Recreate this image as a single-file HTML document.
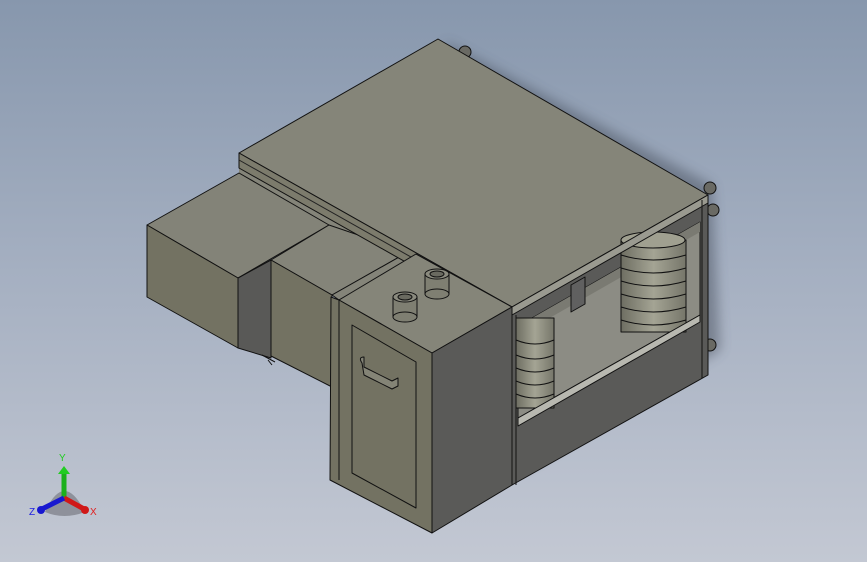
<!DOCTYPE html>
<html><head><style>
html,body{margin:0;padding:0;width:867px;height:562px;overflow:hidden}
body{background:linear-gradient(180deg,#8797ad 0%,#a3aec0 45%,#c3c8d3 100%)}
svg{position:absolute;left:0;top:0}
</style></head><body>
<svg width="867" height="562" viewBox="0 0 867 562">
<defs>
<filter id="sh" x="-20%" y="-20%" width="140%" height="140%"><feGaussianBlur stdDeviation="6"/></filter>
<linearGradient id="spr" x1="0" x2="1"><stop offset="0" stop-color="#6e6e62"/><stop offset="0.5" stop-color="#a4a494"/><stop offset="1" stop-color="#76766a"/></linearGradient>
</defs>
<g stroke="#111" stroke-width="1" stroke-linejoin="round">
<polygon points="445,42 712,185 720,350 520,470" fill="#3a4250" opacity="0.45" stroke="none" filter="url(#sh)"/>
<circle cx="465" cy="52" r="6" fill="#6a6a64"/>
<circle cx="710" cy="188" r="6" fill="#6a6a64"/>
<circle cx="713" cy="210" r="6" fill="#6a6a64"/>
<circle cx="710" cy="345" r="6" fill="#6a6a64"/>
<polygon points="239,166 420,266 408,252 329,225 239,173" fill="#848479" stroke="none"/>
<polygon points="147,225 239,173 329,225 238,278" fill="#838378"/>
<polygon points="147,225 238,278 238,348 147,297" fill="#737262"/>
<polygon points="238,278 271,260 271,358 238,348" fill="#595957"/>
<polygon points="271,260 329,225 408,252 332,295" fill="#848479"/>
<polygon points="332,295 408,252 418,256 339,300" fill="#848479"/>
<polygon points="271,260 332,295 332,387 271,356" fill="#737262"/>
<path d="M262,355 L275,362 M268,360 l4,5" fill="none"/>
<polygon points="239,153 438,39 708,195 512,307" fill="#858579"/>
<polygon points="239,153 512,307 512,322 239,168" fill="#7c7b6c"/>
<line x1="239" y1="160" x2="512" y2="314" stroke="#222"/>
<polygon points="512,307 708,195 708,375 512,485" fill="#5a5a58"/>
<polygon points="518,326 700,222 700,315 518,418" fill="#8c8c84"/>
<polygon points="518,326 700,222 700,232 518,336" fill="#7a7a72" stroke="none"/>
<polygon points="571,285 585,277 585,304 571,312" fill="#606060"/>
<g>
<rect x="621" y="240" width="65" height="92" fill="url(#spr)"/>
<path d="M621,255 q32,10 65,0 M621,268 q32,10 65,0 M621,281 q32,10 65,0 M621,294 q32,10 65,0 M621,307 q32,10 65,0 M621,320 q32,10 65,0" fill="none"/>
<ellipse cx="653" cy="240" rx="32" ry="8" fill="#a0a090"/>
</g>
<g>
<rect x="516" y="318" width="38" height="90" fill="url(#spr)"/>
<path d="M516,340 q19,8 38,0 M516,355 q19,8 38,0 M516,368 q19,8 38,0 M516,381 q19,8 38,0 M516,394 q19,8 38,0" fill="none"/>
</g>
<polygon points="518,418 700,315 700,322 518,426" fill="#b8b8b0"/>
<polygon points="512,307 708,195 708,203 512,315" fill="#9a9a90"/>
<line x1="516" y1="315" x2="516" y2="485"/>
<line x1="702" y1="200" x2="702" y2="378"/>
<polygon points="339,300 416,254 512,307 432,353" fill="#858579"/>
<polygon points="331,297 339,300 432,353 432,533 330,480" fill="#737262"/>
<polygon points="432,353 512,307 512,485 432,533" fill="#5a5a58"/>
<line x1="339" y1="300" x2="339" y2="480"/>
<polygon points="352,325 416,362 416,508 352,473" fill="none"/>
<path d="M362,363 q-4,-6 2,-6 l0,10 l28,14 l6,-3 l0,8 l-6,3 l-28,-14 z" fill="#848476"/>
<g>
<rect x="393" y="297" width="24" height="20" fill="#7f7f72"/>
<ellipse cx="405" cy="317" rx="12" ry="5" fill="#7f7f72"/>
<ellipse cx="405" cy="297" rx="12" ry="5" fill="#8a8a7e"/>
<ellipse cx="405" cy="297" rx="7" ry="3" fill="#6a6a60"/>
<rect x="425" y="274" width="24" height="20" fill="#7f7f72"/>
<ellipse cx="437" cy="294" rx="12" ry="5" fill="#7f7f72"/>
<ellipse cx="437" cy="274" rx="12" ry="5" fill="#8a8a7e"/>
<ellipse cx="437" cy="274" rx="7" ry="3" fill="#6a6a60"/>
</g>
</g>
<g>
<path d="M45,512 Q64,470 85,512 Q64,520 45,512z" fill="#6e7078" opacity="0.6"/>
<line x1="64" y1="498" x2="64" y2="472" stroke="#1cb01c" stroke-width="5"/>
<polygon points="58,474 64,466 70,474" fill="#22cc22"/>
<line x1="64" y1="498" x2="84" y2="509" stroke="#d01818" stroke-width="5"/>
<circle cx="85" cy="510" r="4" fill="#d01818"/>
<line x1="64" y1="498" x2="42" y2="509" stroke="#1818d0" stroke-width="5"/>
<circle cx="41" cy="510" r="4" fill="#1818d0"/>
<text x="59" y="461" font-family="Liberation Sans,sans-serif" font-size="10" fill="#22cc22">Y</text>
<text x="90" y="515" font-family="Liberation Sans,sans-serif" font-size="10" fill="#e02020">X</text>
<text x="29" y="515" font-family="Liberation Sans,sans-serif" font-size="10" fill="#2020e0">Z</text>
</g>
</svg>
</body></html>
